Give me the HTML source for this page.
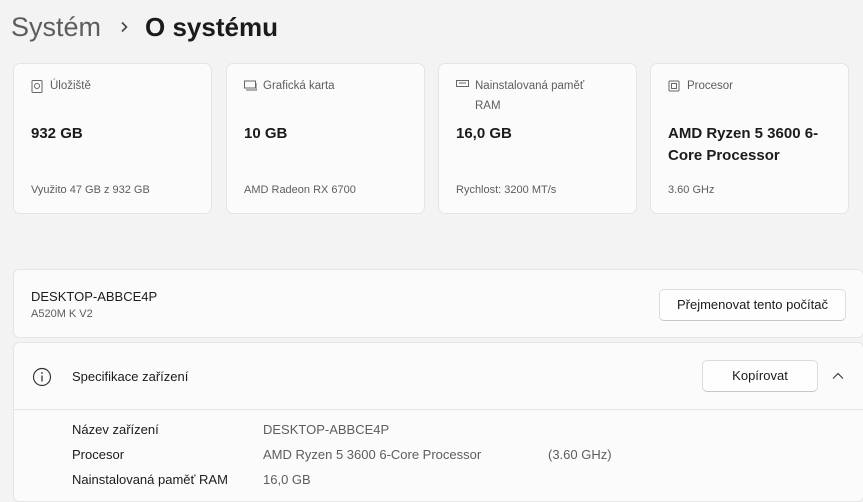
<!DOCTYPE html>
<html><head><meta charset="utf-8"><style>
*{box-sizing:border-box;margin:0;padding:0}
body{width:863px;height:491px;overflow:hidden;background:#f3f3f3;font-family:"Liberation Sans",sans-serif;color:#1b1b1b;position:relative}
.a{position:absolute;white-space:nowrap}
.card{position:absolute;top:63px;width:199px;height:151px;background:#fbfbfb;border:1px solid #e5e5e5;border-radius:7px}
.lbl{position:absolute;left:36px;top:12px;font-size:11.5px;color:#5d5d5d;line-height:20px}
.ic{position:absolute;left:17px;top:16px}
.val{position:absolute;left:17px;top:59px;font-size:15px;font-weight:bold;line-height:22px}
.sub{position:absolute;left:17px;top:120px;font-size:11px;color:#5d5d5d}
.panel{position:absolute;left:13px;width:851px;background:#fbfbfb;border:1px solid #e5e5e5;border-radius:6px}
.btn{position:absolute;background:#fefefe;border:1px solid #dcdcdc;border-bottom-color:#c8c8c8;border-radius:5px;font-size:13px;text-align:center}
.row{position:absolute;font-size:13px;color:#1b1b1b}
.rv{color:#5d5d5d}
</style></head><body>
<div class="a" style="left:11px;top:10px;font-size:27px;color:#5d5d5d;line-height:34px">Systém</div>
<svg class="a" style="left:120px;top:21px" width="8" height="12" viewBox="0 0 8 12"><path d="M2 1.5L6.5 6L2 10.5" fill="none" stroke="#444" stroke-width="1.6"/></svg>
<div class="a" style="left:145px;top:10px;font-size:26px;font-weight:bold;line-height:34px">O systému</div>

<div class="card" style="left:13px">
<svg class="ic" width="12" height="13" viewBox="0 0 12 13"><rect x="1" y="0.5" width="10" height="12" rx="1" fill="none" stroke="#666"/><circle cx="6" cy="6" r="2.5" fill="none" stroke="#666"/></svg>
<div class="lbl">Úložiště</div><div class="val">932 GB</div><div class="sub">Využito 47 GB z 932 GB</div></div>
<div class="card" style="left:226px">
<svg class="ic" width="13" height="11" viewBox="0 0 13 11"><rect x="0.5" y="1" width="11" height="7" fill="none" stroke="#666"/><path d="M2 10h11V3" fill="none" stroke="#666"/></svg>
<div class="lbl">Grafická karta</div><div class="val">10 GB</div><div class="sub">AMD Radeon RX 6700</div></div>
<div class="card" style="left:438px">
<svg class="ic" width="13" height="9" viewBox="0 0 13 9" style="top:16px"><rect x="0.5" y="0.5" width="12" height="6" fill="none" stroke="#666"/><path d="M3 3h7" stroke="#666"/></svg>
<div class="lbl">Nainstalovaná paměť<br>RAM</div><div class="val">16,0 GB</div><div class="sub">Rychlost: 3200 MT/s</div></div>
<div class="card" style="left:650px">
<svg class="ic" width="12" height="12" viewBox="0 0 12 12"><rect x="1" y="1" width="10" height="10" rx="1" fill="none" stroke="#666"/><rect x="3.5" y="3.5" width="5" height="5" fill="none" stroke="#666"/></svg>
<div class="lbl">Procesor</div><div class="val">AMD Ryzen 5 3600 6-<br>Core Processor</div><div class="sub">3.60 GHz</div></div>

<div class="panel" style="top:269px;height:69px">
<div class="a" style="left:17px;top:19px;font-size:13px">DESKTOP-ABBCE4P</div>
<div class="a" style="left:17px;top:38px;font-size:11px;color:#5d5d5d">A520M K V2</div>
<div class="btn" style="left:645px;top:19px;width:187px;height:32px;line-height:30px">Přejmenovat tento počítač</div>
</div>
<div class="panel" style="top:342px;height:160px">
<svg class="a" style="left:18px;top:24px" width="20" height="20" viewBox="0 0 20 20"><circle cx="10" cy="10" r="8.5" fill="none" stroke="#333" stroke-width="1.2"/><path d="M10 8.5v6" stroke="#333" stroke-width="1.3"/><circle cx="10" cy="6" r="0.9" fill="#333"/></svg>
<div class="a" style="left:58px;top:26px;font-size:13px">Specifikace zařízení</div>
<div class="btn" style="left:688px;top:17px;width:116px;height:32px;line-height:30px">Kopírovat</div>
<svg class="a" style="left:818px;top:29px" width="12" height="8" viewBox="0 0 12 8"><path d="M1 6.5L6 1.5L11 6.5" fill="none" stroke="#333" stroke-width="1.1"/></svg>
<div class="a" style="left:0;top:66px;width:849px;height:1px;background:#e5e5e5"></div>
<div class="row" style="left:58px;top:79px">Název zařízení</div><div class="row rv" style="left:249px;top:79px">DESKTOP-ABBCE4P</div>
<div class="row" style="left:58px;top:104px">Procesor</div><div class="row rv" style="left:249px;top:104px">AMD Ryzen 5 3600 6-Core Processor</div><div class="row rv" style="left:534px;top:104px">(3.60 GHz)</div>
<div class="row" style="left:58px;top:129px">Nainstalovaná paměť RAM</div><div class="row rv" style="left:249px;top:129px">16,0 GB</div>
</div>
</body></html>
